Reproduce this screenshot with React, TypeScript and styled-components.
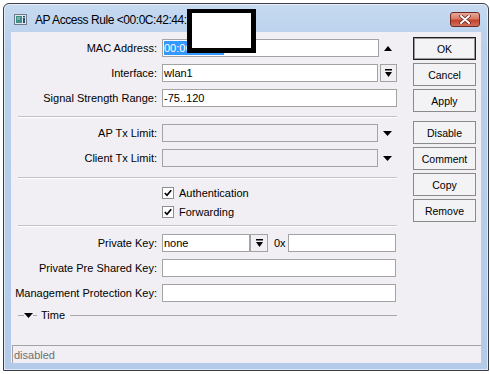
import React from 'react';
import styled, { createGlobalStyle } from 'styled-components';

const GlobalStyle = createGlobalStyle`
  html, body {
    margin: 0;
    padding: 0;
    background: #ffffff;
  }
  body {
    font-family: 'Liberation Sans', Arial, sans-serif;
    font-size: 11px;
    color: #000;
  }
`;

const Window = styled.div`
  position: relative;
  box-sizing: border-box;
  width: 486px;
  height: 368px;
  margin: 3px 0 0 3px;
  border: 1px solid #3b3f45;
  border-radius: 6px 6px 0 0;
  background: linear-gradient(180deg, #c6daf1 0%, #b8cfeb 12%, #b3cbe9 100%);
  box-shadow: inset 0 0 0 1px rgba(255, 255, 255, 0.55);
  padding: 0 7px 7px 7px;
  display: flex;
  flex-direction: column;
`;

const TitleBar = styled.div`
  height: 28px;
  display: flex;
  align-items: flex-start;
  flex: none;
`;

const TitleIcon = styled.svg`
  margin: 10px 0 0 3px;
  flex: none;
`;

const TitleText = styled.div`
  margin: 9px 0 0 8px;
  font-size: 12px;
  letter-spacing: -0.45px;
  line-height: 15px;
  color: #000;
  white-space: nowrap;
`;

const CloseButton = styled.div`
  margin: 8px 1px 0 auto;
  width: 30px;
  height: 15px;
  box-sizing: border-box;
  border: 1px solid #6e2b22;
  border-radius: 3px;
  background: linear-gradient(180deg, #e9a898 0%, #d97a66 45%, #c4432c 55%, #d0705c 100%);
  display: flex;
  align-items: center;
  justify-content: center;
`;

const Redaction = styled.div`
  position: absolute;
  left: 183px;
  top: 5px;
  width: 69px;
  height: 44px;
  box-sizing: border-box;
  border: 4px solid #000;
  border-width: 4px 5px 5px 5px;
  background: #fff;
`;

const Client = styled.div`
  flex: 1;
  display: flex;
  flex-direction: column;
  background: #f1eff3;
`;

const Body = styled.div`
  flex: 1;
  display: flex;
`;

const Form = styled.div`
  width: 386px;
  padding-top: 7px;
  display: flex;
  flex-direction: column;
`;

const Row = styled.div<{ $h?: number; $gap?: number }>`
  display: grid;
  grid-template-columns: 146px 235px;
  column-gap: 5px;
  align-items: center;
  height: ${p => p.$h ?? 18}px;
  margin-bottom: ${p => p.$gap ?? 7}px;
`;

const Label = styled.div`
  text-align: right;
  white-space: nowrap;
  font-size: 11px;
  line-height: 14px;
`;

const Controls = styled.div`
  display: flex;
  align-items: center;
  height: 100%;
`;

const Field = styled.div<{ $w?: number; $disabled?: boolean }>`
  box-sizing: border-box;
  height: 18px;
  width: ${p => (p.$w ? `${p.$w}px` : 'auto')};
  flex: ${p => (p.$w ? 'none' : 1)};
  border: 1px solid #a3a3a3;
  background: ${p => (p.$disabled ? '#f1eff3' : '#ffffff')};
  padding: 0 1px;
  font-size: 11px;
  line-height: 16px;
  white-space: nowrap;
  overflow: hidden;
`;

const Selected = styled.span`
  display: inline-block;
  background: #3399ff;
  color: #fff;
  line-height: 14px;
  margin-top: 1px;
`;

const ArrowSlot = styled.div`
  flex: 1;
  display: flex;
  align-items: center;
  justify-content: center;
`;

const DropButton = styled.div<{ $w?: number; $ml?: number }>`
  box-sizing: border-box;
  width: ${p => p.$w ?? 17}px;
  height: 18px;
  margin-left: ${p => p.$ml ?? 0}px;
  border: 1px solid #a3a3a3;
  display: flex;
  align-items: center;
  justify-content: center;
  flex: none;
`;

const Hex = styled.span`
  margin: 0 2px 0 6px;
  font-size: 11px;
`;

const Separator = styled.div<{ $mt: number; $mb: number }>`
  margin: ${p => p.$mt}px 0 ${p => p.$mb}px 7px;
  height: 1px;
  background: #c3c1c5;
  border-bottom: 1px solid #ffffff;
`;

const CheckRow = styled.label`
  display: flex;
  align-items: center;
  gap: 5px;
  font-size: 11px;
`;

const CheckBox = styled.span`
  box-sizing: border-box;
  width: 12px;
  height: 12px;
  border: 1px solid #8e8f8f;
  background: #fff;
  display: flex;
  align-items: center;
  justify-content: center;
`;

const TimeRow = styled.div`
  display: flex;
  align-items: center;
  height: 14px;
  margin: 6px 0 0 7px;
  width: 379px;
`;

const Rule = styled.div<{ $w?: number }>`
  height: 1px;
  background: #a9a7ab;
  width: ${p => (p.$w ? `${p.$w}px` : 'auto')};
  flex: ${p => (p.$w ? 'none' : 1)};
`;

const TimeLabel = styled.span`
  margin: 0 5px 0 4px;
  font-size: 11px;
`;

const ButtonColumn = styled.div`
  margin-left: 16px;
  padding-top: 5px;
  width: 63px;
  display: flex;
  flex-direction: column;
`;

const Button = styled.div<{ $default?: boolean; $gapBefore?: number }>`
  box-sizing: border-box;
  height: 23px;
  margin-bottom: 3px;
  margin-top: ${p => p.$gapBefore ?? 0}px;
  border: 1px solid ${p => (p.$default ? '#1f1f1f' : '#8a8a8a')};
  box-shadow: ${p => (p.$default ? 'inset 0 0 0 1px #9a9a9a' : 'none')};
  background: #f3f2f5;
  display: flex;
  align-items: center;
  justify-content: center;
  font-size: 10.5px;
  color: #000;
`;

const StatusBar = styled.div`
  height: 18px;
  box-sizing: border-box;
  margin-left: 1px;
  border-top: 1px solid #a4a2a6;
  border-left: 1px solid #a4a2a6;
  padding-left: 1px;
  display: flex;
  align-items: center;
  font-size: 11px;
  color: #6f6f6f;
`;

const Up = () => (
  <svg width="8" height="5" viewBox="0 0 8 5">
    <polygon points="0,5 8,5 4,0" fill="#000" />
  </svg>
);

const Down = () => (
  <svg width="9" height="5" viewBox="0 0 9 5">
    <polygon points="0,0 9,0 4.5,5" fill="#000" />
  </svg>
);

const BarDown = () => (
  <svg width="7" height="8" viewBox="0 0 7 8">
    <rect x="0" y="0" width="7" height="1.5" fill="#000" />
    <polygon points="0,3 7,3 3.5,8" fill="#000" />
  </svg>
);

const Check = () => (
  <svg width="8" height="8" viewBox="0 0 8 8">
    <path d="M0.8 4 L3 6.3 L7.2 1.2" stroke="#000" strokeWidth="1.7" fill="none" />
  </svg>
);

const WinIcon = () => (
  <TitleIcon width="13" height="11" viewBox="0 0 13 11">
    <rect x="0.5" y="0.5" width="12" height="10" fill="#dfe6ec" stroke="#6f7c88" />
    <rect x="2" y="2" width="6" height="7" fill="#3f8f86" />
    <rect x="3" y="3" width="3" height="3" fill="#6fb8a8" />
    <rect x="9" y="2" width="2" height="7" fill="#2f4f7a" />
    <rect x="9.5" y="3" width="1" height="1" fill="#fff" />
  </TitleIcon>
);

const CloseX = () => (
  <svg width="12" height="9" viewBox="0 0 12 9">
    <path d="M2 1 L10 8 M10 1 L2 8" stroke="#5a1e16" strokeWidth="3.4" strokeLinecap="round" />
    <path d="M2 1 L10 8 M10 1 L2 8" stroke="#ffffff" strokeWidth="2" strokeLinecap="round" />
  </svg>
);

export default function App() {
  return (
    <>
      <GlobalStyle />
      <Window>
        <TitleBar>
          <WinIcon />
          <TitleText>AP Access Rule &lt;00:0C:42:44:</TitleText>
          <CloseButton>
            <CloseX />
          </CloseButton>
        </TitleBar>
        <Redaction />
        <Client>
          <Body>
            <Form>
              <Row>
                <Label>MAC Address:</Label>
                <Controls>
                  <Field $w={217}>
                    <Selected>00:0C:42:44</Selected>
                  </Field>
                  <ArrowSlot>
                    <Up />
                  </ArrowSlot>
                </Controls>
              </Row>
              <Row>
                <Label>Interface:</Label>
                <Controls>
                  <Field $w={216}>wlan1</Field>
                  <DropButton $ml={2}>
                    <BarDown />
                  </DropButton>
                </Controls>
              </Row>
              <Row $gap={0}>
                <Label>Signal Strength Range:</Label>
                <Controls>
                  <Field>-75..120</Field>
                </Controls>
              </Row>
              <Separator $mt={9} $mb={6} />
              <Row>
                <Label>AP Tx Limit:</Label>
                <Controls>
                  <Field $w={216} $disabled />
                  <ArrowSlot>
                    <Down />
                  </ArrowSlot>
                </Controls>
              </Row>
              <Row $gap={0}>
                <Label>Client Tx Limit:</Label>
                <Controls>
                  <Field $w={216} $disabled />
                  <ArrowSlot>
                    <Down />
                  </ArrowSlot>
                </Controls>
              </Row>
              <Separator $mt={10} $mb={4} />
              <Row $h={19} $gap={0}>
                <span />
                <CheckRow>
                  <CheckBox>
                    <Check />
                  </CheckBox>
                  Authentication
                </CheckRow>
              </Row>
              <Row $h={19} $gap={0}>
                <span />
                <CheckRow>
                  <CheckBox>
                    <Check />
                  </CheckBox>
                  Forwarding
                </CheckRow>
              </Row>
              <Separator $mt={4} $mb={7} />
              <Row>
                <Label>Private Key:</Label>
                <Controls>
                  <Field $w={88}>none</Field>
                  <DropButton $w={18}>
                    <BarDown />
                  </DropButton>
                  <Hex>0x</Hex>
                  <Field $w={108} />
                </Controls>
              </Row>
              <Row>
                <Label>Private Pre Shared Key:</Label>
                <Controls>
                  <Field $w={234} />
                </Controls>
              </Row>
              <Row $gap={0}>
                <Label>Management Protection Key:</Label>
                <Controls>
                  <Field $w={234} />
                </Controls>
              </Row>
              <TimeRow>
                <Rule $w={6} />
                <Down />
                <Rule $w={4} />
                <TimeLabel>Time</TimeLabel>
                <Rule />
              </TimeRow>
            </Form>
            <ButtonColumn>
              <Button $default>OK</Button>
              <Button>Cancel</Button>
              <Button>Apply</Button>
              <Button $gapBefore={6}>Disable</Button>
              <Button>Comment</Button>
              <Button>Copy</Button>
              <Button>Remove</Button>
            </ButtonColumn>
          </Body>
          <StatusBar>disabled</StatusBar>
        </Client>
      </Window>
    </>
  );
}
